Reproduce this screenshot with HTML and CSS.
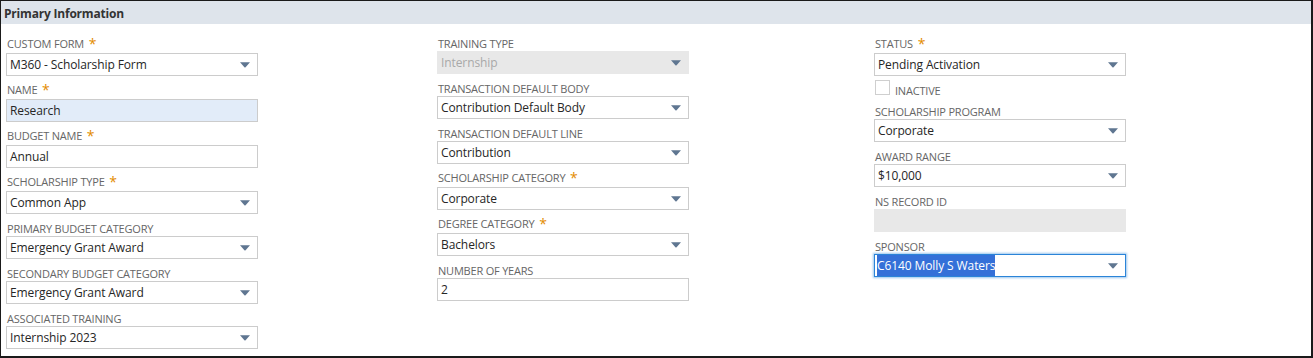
FILE: index.html
```html
<!DOCTYPE html>
<html lang="en">
<head>
  <meta charset="UTF-8">
  <meta name="viewport" content="width=device-width, initial-scale=1.0">
  <title>Primary Information</title>
  <link rel="stylesheet" href="styles.css">
</head>
<body>
  <div class="panel">
    <div class="panel-head">Primary Information</div>

    <div class="panel-body">
      <!-- Column 1 -->
      <div class="col col-req">
        <div class="field">
          <div class="field-label req-label">Custom Form <span class="req">*</span></div>
          <div class="select"><span class="value">M360 - Scholarship Form</span><svg class="arrow" viewBox="0 0 9 5"><path d="M0 0H9L5 4.6Q4.5 5 4 4.6Z"/></svg></div>
        </div>
        <div class="field">
          <div class="field-label req-label">Name <span class="req">*</span></div>
          <div class="input input-filled"><span class="value">Research</span></div>
        </div>
        <div class="field">
          <div class="field-label req-label">Budget Name <span class="req">*</span></div>
          <div class="input"><span class="value">Annual</span></div>
        </div>
        <div class="field">
          <div class="field-label req-label">Scholarship Type <span class="req">*</span></div>
          <div class="select"><span class="value">Common App</span><svg class="arrow" viewBox="0 0 9 5"><path d="M0 0H9L5 4.6Q4.5 5 4 4.6Z"/></svg></div>
        </div>
        <div class="field">
          <div class="field-label">Primary Budget Category</div>
          <div class="select"><span class="value">Emergency Grant Award</span><svg class="arrow" viewBox="0 0 9 5"><path d="M0 0H9L5 4.6Q4.5 5 4 4.6Z"/></svg></div>
        </div>
        <div class="field">
          <div class="field-label">Secondary Budget Category</div>
          <div class="select"><span class="value">Emergency Grant Award</span><svg class="arrow" viewBox="0 0 9 5"><path d="M0 0H9L5 4.6Q4.5 5 4 4.6Z"/></svg></div>
        </div>
        <div class="field">
          <div class="field-label">Associated Training</div>
          <div class="select"><span class="value">Internship 2023</span><svg class="arrow" viewBox="0 0 9 5"><path d="M0 0H9L5 4.6Q4.5 5 4 4.6Z"/></svg></div>
        </div>
      </div>

      <!-- Column 2 -->
      <div class="col">
        <div class="field">
          <div class="field-label">Training Type</div>
          <div class="select disabled"><span class="value">Internship</span><svg class="arrow" viewBox="0 0 9 5"><path d="M0 0H9L5 4.6Q4.5 5 4 4.6Z"/></svg></div>
        </div>
        <div class="field">
          <div class="field-label">Transaction Default Body</div>
          <div class="select"><span class="value">Contribution Default Body</span><svg class="arrow" viewBox="0 0 9 5"><path d="M0 0H9L5 4.6Q4.5 5 4 4.6Z"/></svg></div>
        </div>
        <div class="field">
          <div class="field-label">Transaction Default Line</div>
          <div class="select"><span class="value">Contribution</span><svg class="arrow" viewBox="0 0 9 5"><path d="M0 0H9L5 4.6Q4.5 5 4 4.6Z"/></svg></div>
        </div>
        <div class="field">
          <div class="field-label req-label">Scholarship Category <span class="req">*</span></div>
          <div class="select"><span class="value">Corporate</span><svg class="arrow" viewBox="0 0 9 5"><path d="M0 0H9L5 4.6Q4.5 5 4 4.6Z"/></svg></div>
        </div>
        <div class="field">
          <div class="field-label req-label">Degree Category <span class="req">*</span></div>
          <div class="select"><span class="value">Bachelors</span><svg class="arrow" viewBox="0 0 9 5"><path d="M0 0H9L5 4.6Q4.5 5 4 4.6Z"/></svg></div>
        </div>
        <div class="field">
          <div class="field-label">Number of Years</div>
          <div class="input"><span class="value">2</span></div>
        </div>
      </div>

      <!-- Column 3 -->
      <div class="col col-req">
        <div class="field">
          <div class="field-label req-label">Status <span class="req">*</span></div>
          <div class="select"><span class="value">Pending Activation</span><svg class="arrow" viewBox="0 0 9 5"><path d="M0 0H9L5 4.6Q4.5 5 4 4.6Z"/></svg></div>
        </div>
        <div class="check-row">
          <span class="checkbox"></span>
          <span class="check-label">Inactive</span>
        </div>
        <div class="field">
          <div class="field-label">Scholarship Program</div>
          <div class="select"><span class="value">Corporate</span><svg class="arrow" viewBox="0 0 9 5"><path d="M0 0H9L5 4.6Q4.5 5 4 4.6Z"/></svg></div>
        </div>
        <div class="field">
          <div class="field-label">Award Range</div>
          <div class="select"><span class="value">$10,000</span><svg class="arrow" viewBox="0 0 9 5"><path d="M0 0H9L5 4.6Q4.5 5 4 4.6Z"/></svg></div>
        </div>
        <div class="field">
          <div class="field-label">NS Record ID</div>
          <div class="input disabled"></div>
        </div>
        <div class="field">
          <div class="field-label">Sponsor</div>
          <div class="select focused"><span class="value"><span class="selected">C6140 Molly S Waters</span></span><svg class="arrow" viewBox="0 0 9 5"><path d="M0 0H9L5 4.6Q4.5 5 4 4.6Z"/></svg></div>
        </div>
      </div>
    </div>
  </div>
</body>
</html>
```

FILE: styles.css
```css
body {
  margin: 0;
  padding: 0;
  background: #ffffff;
  font-family: 'Open Sans', sans-serif;
  color: #262626;
}

.panel {
  box-sizing: border-box;
  width: 1313px;
  height: 358px;
  border: 1px solid #1a1a1a;
  border-right-width: 2px;
  border-bottom-width: 2px;
  background: #ffffff;
}

.panel-head {
  height: 23px;
  line-height: 25px;
  padding-left: 3px;
  background: #dee4eb;
  font-size: 12px;
  font-weight: bold;
  letter-spacing: -0.2px;
  color: #333333;
}

.panel-body {
  display: grid;
  grid-template-columns: 431px 437px 254px;
  padding: 12px 0 0 5px;
}

/* columns that open with a required field sit 1px lower */
.col-req {
  padding-top: 1px;
}

.field {
  margin-bottom: 7px;
}

/* Labels */
.field-label {
  height: 15px;
  line-height: 15px;
  padding-left: 1px;
  font-size: 11px;
  color: #666666;
  text-transform: uppercase;
  letter-spacing: -0.2px;
  white-space: nowrap;
}

.req-label {
  height: 16px;
  line-height: 14px;
}

.req {
  margin-left: 2px;
  font-size: 14px;
  color: #e38b00;
  vertical-align: top;
}

/* Boxes */
.input,
.select {
  position: relative;
  box-sizing: border-box;
  width: 252px;
  height: 23px;
  border: 1px solid #cccccc;
  background: #ffffff;
}

.value {
  display: block;
  padding-left: 3px;
  line-height: 22px;
  font-size: 12px;
  letter-spacing: -0.1px;
  color: #262626;
  white-space: nowrap;
}

.input-filled {
  background: #e2ecf9;
}

.disabled {
  border-color: #e8e8e8;
  background: #e8e8e8;
}

.disabled .value {
  color: #a8a8a8;
}

.arrow {
  position: absolute;
  right: 7px;
  top: 8px;
  width: 10px;
  height: 6px;
  fill: #5f7691;
}

.focused {
  border-color: #2b84d8;
  box-shadow: 0 0 2px 1px #9cc6ee;
}

.focused .value {
  padding-left: 2px;
}

.selected {
  background: #3470d8;
  color: #ffffff;
  padding: 2px 0;
}

/* Checkbox row */
.check-row {
  display: flex;
  align-items: center;
  height: 15px;
  margin: -3px 0 9px 1px;
}

.checkbox {
  box-sizing: border-box;
  width: 15px;
  height: 15px;
  border: 1px solid #cfcfcf;
  background: #ffffff;
}

.check-label {
  margin: 5px 0 0 5px;
  font-size: 11px;
  color: #666666;
  text-transform: uppercase;
  letter-spacing: -0.2px;
}
```
